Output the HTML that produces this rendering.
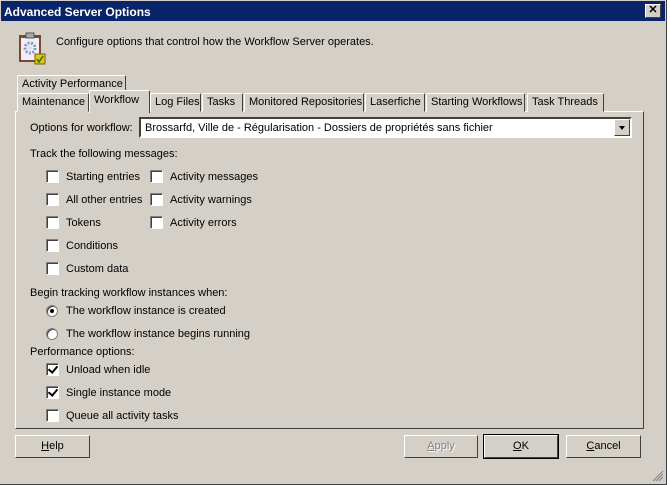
<!DOCTYPE html>
<html><head><meta charset="utf-8"><style>
*{margin:0;padding:0;box-sizing:border-box}
body{width:670px;height:485px;background:#fff;font:11px "Liberation Sans",sans-serif;color:#000;position:relative;overflow:hidden}
.win{position:absolute;left:0;top:0;width:667px;height:485px;background:#d4d0c8;border-right:1px solid #404040;border-bottom:1px solid #404040}
.title{position:absolute;left:1px;top:1px;width:664px;height:20px;background:#0a246a;color:#fff;font-weight:bold;font-size:12px;padding:4px 3px}
.x{position:absolute;right:4px;top:3px;width:16px;height:14px;background:#d4d0c8;border:1px solid;border-color:#fff #404040 #404040 #fff;color:#000;font-size:11px;line-height:11px;text-align:center;font-weight:bold}
.a{position:absolute;white-space:nowrap}
.tab{position:absolute;height:19px;border:1px solid;border-color:#fff #404040 transparent #fff;border-radius:2px 2px 0 0;padding:2px 4px;white-space:nowrap;background:#d4d0c8}
.panel{position:absolute;left:15px;top:111px;width:629px;height:318px;border:1px solid;border-color:#fff #404040 #404040 #fff}
.cb{position:absolute;width:13px;height:13px;background:#fff;border:1px solid;border-color:#808080 #fff #fff #808080;box-shadow:inset 1px 1px 0 #404040}
.cb.c::after{content:"";position:absolute;left:3px;top:0px;width:4px;height:7px;border:solid #000;border-width:0 2px 2px 0;transform:rotate(40deg)}
.rb{position:absolute;width:12px;height:12px;border-radius:50%;background:#fff;border:1px solid #808080;box-shadow:inset 1px 1px 0 #404040}
.rb.c::after{content:"";position:absolute;left:3px;top:3px;width:4px;height:4px;border-radius:50%;background:#000}
.btn{position:absolute;top:435px;height:23px;border:1px solid;border-color:#fff #404040 #404040 #fff;text-align:center;line-height:21px}
</style></head><body>
<div class="win">
<div class="title">Advanced Server Options<div class="x">✕</div></div>
<svg class="a" style="left:18px;top:32px" width="28" height="33" viewBox="0 0 28 33">
<rect x="1" y="3" width="22" height="27" fill="#7a4a2a"/><rect x="3" y="6" width="18" height="22" fill="#eef"/>
<rect x="8" y="1" width="8" height="5" fill="#aaa" stroke="#555"/>
<circle cx="12" cy="16" r="5" fill="none" stroke="#8a9ab0" stroke-width="3" stroke-dasharray="2 1.5"/><circle cx="12" cy="16" r="2" fill="#dde"/>
<rect x="17" y="22" width="10" height="10" fill="#e8c020" stroke="#806000"/><path d="M19 27l2 3 4-6" stroke="#080" stroke-width="1.5" fill="none"/></svg>
<div class="a" style="left:56px;top:36px">Configure options that control how the Workflow Server operates.</div>
<div class="tab" style="left:17px;top:75px;width:109px">Activity Performance</div>
<div class="panel"></div>
<div class="tab" style="left:17px;top:93px;width:72px">Maintenance</div>
<div class="tab" style="left:150px;top:93px;width:51px">Log Files</div>
<div class="tab" style="left:202px;top:93px;width:41px">Tasks</div>
<div class="tab" style="left:244px;top:93px;width:120px">Monitored Repositories</div>
<div class="tab" style="left:365px;top:93px;width:60px">Laserfiche</div>
<div class="tab" style="left:426px;top:93px;width:99px">Starting Workflows</div>
<div class="tab" style="left:527px;top:93px;width:77px">Task Threads</div>
<div class="tab" style="left:89px;top:90px;width:61px;height:23px;border-bottom:none;padding-top:3px">Workflow</div>
<div class="a" style="left:30px;top:122px">Options for workflow:</div>
<div class="a" style="left:139px;top:117px;width:493px;height:21px;background:#fff;border:2px solid;border-color:#404040 #fff #fff #404040;padding:3px 4px">Brossarfd, Ville de - Régularisation - Dossiers de propriétés sans fichier
<div style="position:absolute;right:0;top:0;width:16px;height:17px;background:#d4d0c8;border:1px solid;border-color:#fff #404040 #404040 #fff"><div style="position:absolute;left:4px;top:6px;border:3.5px solid transparent;border-top:4px solid #000"></div></div></div>
<div class="a" style="left:30px;top:148px">Track the following messages:</div>
<div class="cb" style="left:46px;top:170px"></div><div class="a" style="left:66px;top:171px">Starting entries</div>
<div class="cb" style="left:46px;top:193px"></div><div class="a" style="left:66px;top:194px">All other entries</div>
<div class="cb" style="left:46px;top:216px"></div><div class="a" style="left:66px;top:217px">Tokens</div>
<div class="cb" style="left:46px;top:239px"></div><div class="a" style="left:66px;top:240px">Conditions</div>
<div class="cb" style="left:46px;top:262px"></div><div class="a" style="left:66px;top:263px">Custom data</div>
<div class="cb" style="left:150px;top:170px"></div><div class="a" style="left:170px;top:171px">Activity messages</div>
<div class="cb" style="left:150px;top:193px"></div><div class="a" style="left:170px;top:194px">Activity warnings</div>
<div class="cb" style="left:150px;top:216px"></div><div class="a" style="left:170px;top:217px">Activity errors</div>
<div class="a" style="left:30px;top:287px">Begin tracking workflow instances when:</div>
<div class="rb c" style="left:46px;top:305px"></div><div class="a" style="left:66px;top:305px">The workflow instance is created</div>
<div class="rb" style="left:46px;top:328px"></div><div class="a" style="left:66px;top:328px">The workflow instance begins running</div>
<div class="a" style="left:30px;top:346px">Performance options:</div>
<div class="cb c" style="left:46px;top:363px"></div><div class="a" style="left:66px;top:364px">Unload when idle</div>
<div class="cb c" style="left:46px;top:386px"></div><div class="a" style="left:66px;top:387px">Single instance mode</div>
<div class="cb" style="left:46px;top:409px"></div><div class="a" style="left:66px;top:410px">Queue all activity tasks</div>
<div class="btn" style="left:15px;width:75px"><u>H</u>elp</div>
<div class="btn" style="left:404px;width:74px;color:#808080;text-shadow:1px 1px 0 #fff"><u>A</u>pply</div>
<div class="btn" style="left:484px;width:74px;outline:1px solid #000"><u>O</u>K</div>
<div class="btn" style="left:566px;width:75px"><u>C</u>ancel</div>
<svg class="a" style="left:652px;top:470px" width="12" height="12"><path d="M11 1L1 11M11 4L4 11M11 7L7 11" stroke="#808080"/></svg>
</div>
</body></html>
